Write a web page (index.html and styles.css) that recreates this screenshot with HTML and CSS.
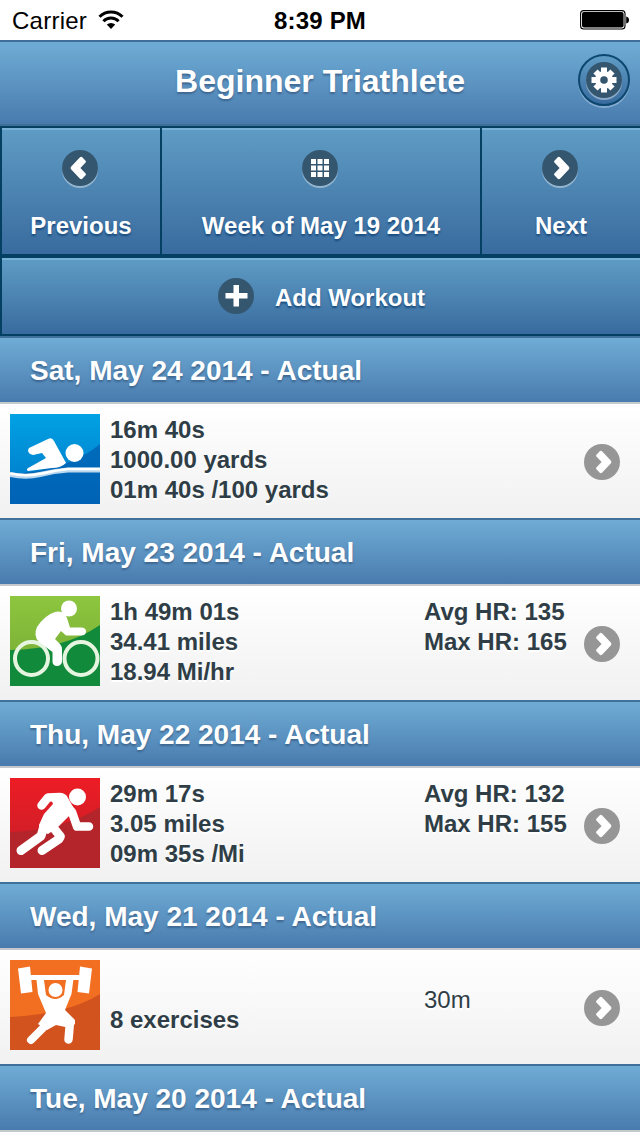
FILE: index.html
```html
<!DOCTYPE html>
<html lang="en">
	<head>
		<meta charset="utf-8">
		<title>Beginner Triathlete</title>
		<link rel="stylesheet" href="styles.css">
	</head>
	<body>
		<svg class="defs" width="0" height="0">
			<symbol id="arrow" viewBox="0 0 36 36">
				<path d="M12.2 11 L16 7 Q17 6.600 18 7.300 L27 16.700 Q27.800 18 27 19.300 L18 28.700 Q17 29.400 16 29 L12.200 25 Q11.800 24.200 12.400 23.400 L17.600 18 L12.400 12.600 Q11.800 11.800 12.200 11 Z" fill="#fff"/>
			</symbol>
		</svg>
		<div class="statusbar">
			<div class="carrier">
				<span>Carrier</span>
				<svg class="wifi" width="26" height="20" viewBox="0 0 26 20">
					<path d="M1.5 6.8 A16.2 16.2 0 0 1 24.5 6.8" fill="none" stroke="#000" stroke-width="3"/>
					<path d="M5.4 11.2 A10.8 10.8 0 0 1 20.6 11.2" fill="none" stroke="#000" stroke-width="3"/>
					<path d="M8.8 14.6 A6 6 0 0 1 17.2 14.6 L13 19 Z"/>
				</svg>
			</div>
			<div class="clock">8:39 PM</div>
			<svg class="battery" width="50" height="20" viewBox="0 0 50 20">
				<rect x=".6" y=".6" width="44.4" height="18.4" rx="3" fill="#fff" stroke="#000" stroke-width="1.1"/>
				<rect x="2" y="2" width="41.6" height="15.6" rx="2"/>
				<path d="M46.2 6.5 Q49 7 49 10 Q49 13 46.2 13.5 Z"/>
			</svg>
		</div>
		<header class="header">
			<h1>Beginner Triathlete</h1>
			<a class="settings">
				<span class="icon">
					<svg width="36" height="36" viewBox="0 0 36 36">
						<g stroke="#fff" stroke-width="6">
							<path d="M18 5.5 V30.5"/>
							<path d="M5.5 18 H30.5"/>
							<path d="M9.5 9.5 L26.5 26.5"/>
							<path d="M26.5 9.5 L9.5 26.5"/>
						</g>
						<circle cx="18" cy="18" r="9" fill="#fff"/>
						<circle cx="18" cy="18" r="3.8" fill="#34566f"/>
					</svg>
				</span>
			</a>
		</header>
		<nav class="nav">
			<a class="btn prev">
				<span class="icon"><svg class="flip" width="36" height="36"><use href="#arrow"/></svg></span>
				<span class="caption">Previous</span>
			</a>
			<a class="btn week">
				<span class="icon">
					<svg width="36" height="36" viewBox="0 0 36 36" fill="#fff">
						<path d="M9 9h5v5h-5z M15.5 9h5v5h-5z M22 9h5v5h-5z M9 15.5h5v5h-5z M15.5 15.5h5v5h-5z M22 15.5h5v5h-5z M9 22h5v5h-5z M15.5 22h5v5h-5z M22 22h5v5h-5z"/>
					</svg>
				</span>
				<span class="caption">Week of May 19 2014</span>
			</a>
			<a class="btn next">
				<span class="icon"><svg width="36" height="36"><use href="#arrow"/></svg></span>
				<span class="caption">Next</span>
			</a>
		</nav>
		<a class="btn add">
			<span class="icon">
				<svg width="36" height="36" viewBox="0 0 36 36" fill="#fff">
					<path d="M15.500 7h5.500v8h8.500v5.500h-8.500v8h-5.500v-8h-8v-5.500h8z"/>
				</svg>
			</span>
			<span class="label">Add Workout</span>
		</a>

		<h2 class="divider">Sat, May 24 2014 - Actual</h2>
		<div class="item">
			<svg class="sport" width="90" height="90" viewBox="0 0 90 90">
				<linearGradient id="swim" x1="0" y1="0" x2="0" y2="1">
					<stop offset="0" stop-color="#02a2e4"/>
					<stop offset="1" stop-color="#0074c6"/>
				</linearGradient>
				<rect width="90" height="90" fill="url(#swim)"/>
				<path d="M0 60 Q60 56 90 30 V90 H0 Z" fill="#005eb0" opacity=".75"/>
				<path d="M19 34 L38 25 Q42 23 44 27 L56 49 Q51 54 42 54 L18 57 Q15 55 20 53 L36 44 L32 39 L23 41 Q18 40 18 36 Z" fill="#fff"/>
				<circle cx="64.500" cy="39" r="9" fill="#fff"/>
				<path d="M0 60.500 Q16 64 30 60.500 T58 56 L90 56" fill="none" stroke="#bcd8ef" stroke-width="5"/>
				<path d="M0 59.500 Q16 63 32 59.500 T58 55 L90 55" fill="none" stroke="#fff" stroke-width="2.500"/>
			</svg>
			<div class="stats">16m 40s<br>1000.00 yards<br>01m 40s /100 yards</div>
			<div class="heart"></div>
			<span class="go"><svg width="36" height="36"><use href="#arrow"/></svg></span>
		</div>

		<h2 class="divider">Fri, May 23 2014 - Actual</h2>
		<div class="item">
			<svg class="sport" width="90" height="90" viewBox="0 0 90 90">
				<linearGradient id="bike" x1="0" y1="0" x2="0" y2="1">
					<stop offset="0" stop-color="#8dc63f"/>
					<stop offset="1" stop-color="#74a832"/>
				</linearGradient>
				<rect width="90" height="90" fill="url(#bike)"/>
				<path d="M0 54 Q55 53 90 29 V90 H0 Z" fill="#118a3b"/>
				<g fill="none" stroke="#e6f5df" stroke-width="4">
					<circle cx="21.500" cy="62.500" r="16.500"/>
					<circle cx="71" cy="62.500" r="16.500"/>
				</g>
				<circle cx="59" cy="12.500" r="8" fill="#fff"/>
				<path d="M27 31 Q35 19 45 16 Q54 14 57 22 L60 31.500 H72 Q76 32 76 35.500 Q76 39 72 39.500 H56 L51 35 L45 43 L50 48 Q52 50 52 54 V66 Q51 70 47 70 Q43 70 42.500 66 V56 L29 46 Q23 40 27 31 Z" fill="#fff"/>
			</svg>
			<div class="stats">1h 49m 01s<br>34.41 miles<br>18.94 Mi/hr</div>
			<div class="heart">Avg HR: 135<br>Max HR: 165</div>
			<span class="go"><svg width="36" height="36"><use href="#arrow"/></svg></span>
		</div>

		<h2 class="divider">Thu, May 22 2014 - Actual</h2>
		<div class="item">
			<svg class="sport" width="90" height="90" viewBox="0 0 90 90">
				<linearGradient id="run" x1="0" y1="0" x2="0" y2="1">
					<stop offset="0" stop-color="#ed1c24"/>
					<stop offset="1" stop-color="#c3202a"/>
				</linearGradient>
				<rect width="90" height="90" fill="url(#run)"/>
				<path d="M0 54 Q55 52 90 29 V90 H0 Z" fill="#b3242b"/>
				<circle cx="67.500" cy="19" r="8.500" fill="#fff"/>
				<g fill="none" stroke="#fff" stroke-width="8.500" stroke-linecap="round" stroke-linejoin="round">
					<path d="M31.500 27.500 L38 19.500 L50 19"/>
					<path d="M55 26 L62 34 L67 48.500 L79 48.500"/>
					<path d="M34 48 L31 58 L11 72.500" stroke-width="9"/>
					<path d="M42 48 L50.500 58.500 L49 61 L32 72.500" stroke-width="9"/>
				</g>
				<path d="M40 18 L50 15 Q56 15 58 20 L63 29 L60 37 L47 50 L38 56 L30 53 L29 47 L34 36 L43 26 Z" fill="#fff"/>
			</svg>
			<div class="stats">29m 17s<br>3.05 miles<br>09m 35s /Mi</div>
			<div class="heart">Avg HR: 132<br>Max HR: 155</div>
			<span class="go"><svg width="36" height="36"><use href="#arrow"/></svg></span>
		</div>

		<h2 class="divider">Wed, May 21 2014 - Actual</h2>
		<div class="item">
			<svg class="sport" width="90" height="90" viewBox="0 0 90 90">
				<rect width="90" height="90" fill="#f26f21"/>
				<path d="M0 57 Q58 54 90 34 V90 H0 Z" fill="#d3531f"/>
				<g fill="#fff">
					<path d="M8 8.500 L20 6.500 L22.500 32 L11 33.500 Z"/>
					<path d="M82 8.500 L70 6.500 L67.500 32 L79 33.500 Z"/>
					<path d="M26 15 H64 L61.500 34 L55 50 L65 60 V64 L60 68 L46 65 L37 70 L28 64 L36 53 L28 34 Z"/>
				</g>
				<path d="M34 20 H56 L54 35 Q45.500 43 36 35 Z" fill="#f26f21"/>
				<circle cx="45.500" cy="30" r="7" fill="#fff"/>
				<g fill="none" stroke="#fff" stroke-linecap="round" stroke-linejoin="round">
					<path d="M20 17.500 H70" stroke-width="5"/>
					<path d="M35 66 L21 80" stroke-width="8"/>
					<path d="M60 62 L58.500 79.500" stroke-width="8.500"/>
				</g>
			</svg>
			<div class="stats low">8 exercises</div>
			<div class="heart duration">30m</div>
			<span class="go"><svg width="36" height="36"><use href="#arrow"/></svg></span>
		</div>

		<h2 class="divider">Tue, May 20 2014 - Actual</h2>
	</body>
</html>
```

FILE: styles.css
```css
body {
	margin: 0;
	overflow: hidden;
	background: #fff;
	font-family: "Liberation Sans", Arial, sans-serif;
	font-size: 24px;
	color: #2f3e46;
}
svg {
	display: block;
}
.defs {
	position: absolute;
}
.statusbar {
	display: grid;
	grid-template-columns: 1fr auto 1fr;
	align-items: center;
	height: 40px;
	padding: 0 12px 0 12px;
	box-sizing: border-box;
	color: #000;
}
.carrier {
	display: flex;
	align-items: center;
	gap: 11px;
	letter-spacing: .25px;
}
.carrier span {
	padding-top: 2px;
}
.clock {
	padding-top: 1px;
	font-weight: bold;
	letter-spacing: .2px;
}
.battery {
	justify-self: end;
	margin-right: -2px;
}
.header {
	display: grid;
	grid-template-columns: 62px 1fr 62px;
	align-items: center;
	height: 86px;
	box-sizing: border-box;
	border-top: 2px solid #3f6f98;
	border-bottom: 2px solid #3d6f97;
	background: linear-gradient(#6facd5, #497bae);
}
.header h1 {
	grid-column: 2;
	margin: 0;
	padding-bottom: 3px;
	text-align: center;
	font-size: 32px;
	color: #fff;
	text-shadow: 0 2px 2px #3e6790;
}
.settings {
	display: flex;
	align-items: center;
	justify-content: center;
	width: 48px;
	height: 48px;
	margin-bottom: 6px;
	border: 2px solid #0c4770;
	border-radius: 50%;
	background: linear-gradient(#5f9cc5, #396b9e);
	box-shadow: 0 2px 0 rgba(255, 255, 255, .3);
}
.icon {
	flex: none;
	width: 36px;
	height: 36px;
	border-radius: 50%;
	background: #34566f;
	box-shadow: 0 2px 0 rgba(255, 255, 255, .4);
}
.flip {
	transform: scaleX(-1);
}
.nav {
	display: grid;
	grid-template-columns: 160px 320px 160px;
	height: 130px;
}
.btn {
	display: flex;
	align-items: center;
	box-sizing: border-box;
	border: 2px solid #044062;
	border-right: 0;
	background: linear-gradient(#5f9cc5, #396b9e);
	box-shadow: inset 0 2px 0 #79b0d5;
	font-weight: bold;
	color: #fff;
	text-shadow: 0 2px 2px #194b7e;
}
.nav .btn {
	flex-direction: column;
	gap: 26px;
	padding: 22px 2px 0 0;
}
.caption {
	margin-left: 2px;
}
.add {
	justify-content: center;
	gap: 21px;
	height: 80px;
	padding-left: 1px;
}
.add .icon {
	box-shadow: none;
}
.label {
	padding-top: 3px;
}
.divider {
	height: 68px;
	margin: 0;
	padding-left: 30px;
	box-sizing: border-box;
	border-top: 2px solid #3f719a;
	border-bottom: 2px solid #c5c9ce;
	background: linear-gradient(#6facd5, #497bae);
	font-size: 28px;
	line-height: 66px;
	color: #fff;
	text-shadow: 0 2px 2px #3e6790;
}
.item {
	display: grid;
	grid-template-columns: 100px 314px 160px 36px;
	height: 114px;
	padding: 10px;
	box-sizing: border-box;
	background: linear-gradient(#fff, #f1f1f1);
	font-weight: bold;
	line-height: 30px;
	text-shadow: 0 2px 0 #fff;
}
.stats, .heart {
	padding-top: 1px;
}
.low {
	padding-top: 45px;
}
.duration {
	padding-top: 25px;
	font-weight: normal;
}
.go {
	width: 36px;
	height: 36px;
	margin-top: 30px;
	border-radius: 50%;
	background: #969696;
}
```
